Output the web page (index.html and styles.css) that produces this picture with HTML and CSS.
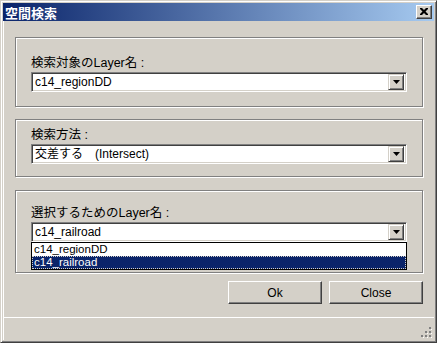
FILE: index.html
```html
<!DOCTYPE html>
<html>
<head>
<meta charset="utf-8">
<link rel="stylesheet" href="styles.css">
</head>
<body>
<div class="window">
  <div class="titlebar">
    <span class="title">空間検索</span>
    <span class="close-btn"><svg width="8" height="7" viewBox="0 0 8 7"><path d="M0 0h2l2 2 2-2h2v1l-2.5 2.5L8 6v1H6L4 5 2 7H0V6l2.5-2.5L0 1z" fill="#000"/></svg></span>
  </div>
  <div class="client">
    <div class="group g1">
      <div class="label">検索対象のLayer名 :</div>
      <div class="combo"><span class="combo-text">c14_regionDD</span><span class="drop"><svg width="7" height="4" viewBox="0 0 7 4"><path d="M0 0h7L3.5 4z" fill="#000"/></svg></span></div>
    </div>
    <div class="group g2">
      <div class="label">検索方法 :</div>
      <div class="combo"><span class="combo-text">交差する　(Intersect)</span><span class="drop"><svg width="7" height="4" viewBox="0 0 7 4"><path d="M0 0h7L3.5 4z" fill="#000"/></svg></span></div>
    </div>
    <div class="group g3">
      <div class="label">選択するためのLayer名 :</div>
      <div class="combo"><span class="combo-text">c14_railroad</span><span class="drop"><svg width="7" height="4" viewBox="0 0 7 4"><path d="M0 0h7L3.5 4z" fill="#000"/></svg></span></div>
      <div class="list">
        <div class="item">c14_regionDD</div>
        <div class="item sel">c14_railroad</div>
      </div>
    </div>
    <div class="buttons">
      <div class="btn">Ok</div>
      <div class="btn">Close</div>
    </div>
    <div class="status">
      <svg class="grip" width="11" height="11" viewBox="0 0 11 11">
        <g fill="#808080">
          <rect x="8" y="0" width="2" height="2"/>
          <rect x="4" y="4" width="2" height="2"/><rect x="8" y="4" width="2" height="2"/>
          <rect x="0" y="8" width="2" height="2"/><rect x="4" y="8" width="2" height="2"/><rect x="8" y="8" width="2" height="2"/>
        </g>
        <g fill="#fff">
          <rect x="10" y="2" width="1" height="1"/>
          <rect x="6" y="6" width="1" height="1"/><rect x="10" y="6" width="1" height="1"/>
          <rect x="2" y="10" width="1" height="1"/><rect x="6" y="10" width="1" height="1"/><rect x="10" y="10" width="1" height="1"/>
        </g>
      </svg>
    </div>
  </div>
</div>
</body>
</html>
```
FILE: styles.css
```css
* { box-sizing: border-box; }
html, body { margin: 0; padding: 0; }
body {
  background: #d4d0c8;
  font-family: "Liberation Sans", "Noto Sans CJK JP", sans-serif;
  font-size: 12px;
  color: #000;
}
.window {
  width: 437px;
  height: 343px;
  background: #d4d0c8;
  border-top: 1px solid #d4d0c8;
  border-left: 1px solid #d4d0c8;
  border-right: 1px solid #404040;
  border-bottom: 1px solid #404040;
  box-shadow: inset 1px 1px 0 #fff, inset -1px -1px 0 #808080;
  padding: 2px;
  display: flex;
  flex-direction: column;
}
.titlebar {
  height: 18px;
  background: linear-gradient(to right, #0a246a, #a6caf0);
  display: flex;
  align-items: center;
  justify-content: space-between;
  padding: 0 2px 0 2px;
  flex: none;
}
.title {
  color: #fff;
  font-weight: bold;
  font-family: "Noto Sans CJK JP", sans-serif;
  font-size: 13px;
  line-height: 15px;
}
.close-btn {
  width: 16px;
  height: 14px;
  background: #d4d0c8;
  border-top: 1px solid #fff;
  border-left: 1px solid #fff;
  border-right: 1px solid #404040;
  border-bottom: 1px solid #404040;
  box-shadow: inset -1px -1px 0 #808080;
  display: flex;
  align-items: center;
  justify-content: center;
  padding: 0 1px 1px 0;
}
.close-btn svg { display: block; }
.client {
  flex: 1;
  display: flex;
  flex-direction: column;
  border-left: 1px solid #fff;
  padding: 0 11px 0 11px;
}
.group {
  border: 1px solid #808080;
  box-shadow: inset 1px 1px 0 #fff, 1px 1px 0 #fff;
  padding-left: 15px;
  padding-right: 15px;
  display: flex;
  flex-direction: column;
}
.g1 { margin-top: 16px; height: 70px; padding-top: 19px; }
.g2 { margin-top: 12px; height: 58px; padding-top: 9px; }
.g3 { margin-top: 13px; height: 83px; padding-top: 16px; }
.label {
  height: 13px;
  line-height: 13px;
  margin-bottom: 2px;
  white-space: nowrap;
  font-size: 12.5px;
}
.combo {
  height: 20px;
  background: #fff;
  border-top: 1px solid #808080;
  border-left: 1px solid #808080;
  border-right: 1px solid #fff;
  border-bottom: 1px solid #fff;
  box-shadow: inset 1px 1px 0 #404040, inset -1px -1px 0 #d4d0c8;
  display: flex;
  align-items: center;
  padding: 2px 2px 2px 3px;
}
.combo-text {
  flex: 1;
  line-height: 14px;
  white-space: nowrap;
}
.drop {
  width: 16px;
  height: 16px;
  background: #d4d0c8;
  border-top: 1px solid #d4d0c8;
  border-left: 1px solid #d4d0c8;
  border-right: 1px solid #404040;
  border-bottom: 1px solid #404040;
  box-shadow: inset 1px 1px 0 #fff, inset -1px -1px 0 #808080;
  display: flex;
  align-items: center;
  justify-content: center;
}
.drop svg { display: block; }
.list {
  height: 28px;
  background: #fff;
  border: 1px solid #000;
}
.item {
  height: 13px;
  line-height: 13px;
  font-size: 11.5px;
  padding-left: 2px;
  white-space: nowrap;
  overflow: hidden;
}
.item.sel {
  background: #0a246a;
  color: #fff;
  outline: 1px dotted #d4d0c8;
  outline-offset: -1px;
}
.buttons {
  margin-top: 8px;
  display: flex;
  justify-content: flex-end;
  gap: 7px;
}
.btn {
  width: 94px;
  height: 23px;
  background: #d4d0c8;
  border-top: 1px solid #fff;
  border-left: 1px solid #fff;
  border-right: 1px solid #404040;
  border-bottom: 1px solid #404040;
  box-shadow: inset -1px -1px 0 #808080;
  display: flex;
  align-items: center;
  justify-content: center;
}
.status {
  margin-top: auto;
  margin-left: -11px;
  margin-right: -11px;
  height: 23px;
  border-top: 1px solid #fff;
  display: flex;
  justify-content: flex-end;
  align-items: flex-end;
  padding: 0 2px 2px 0;
}
.grip { display: block; }
```
